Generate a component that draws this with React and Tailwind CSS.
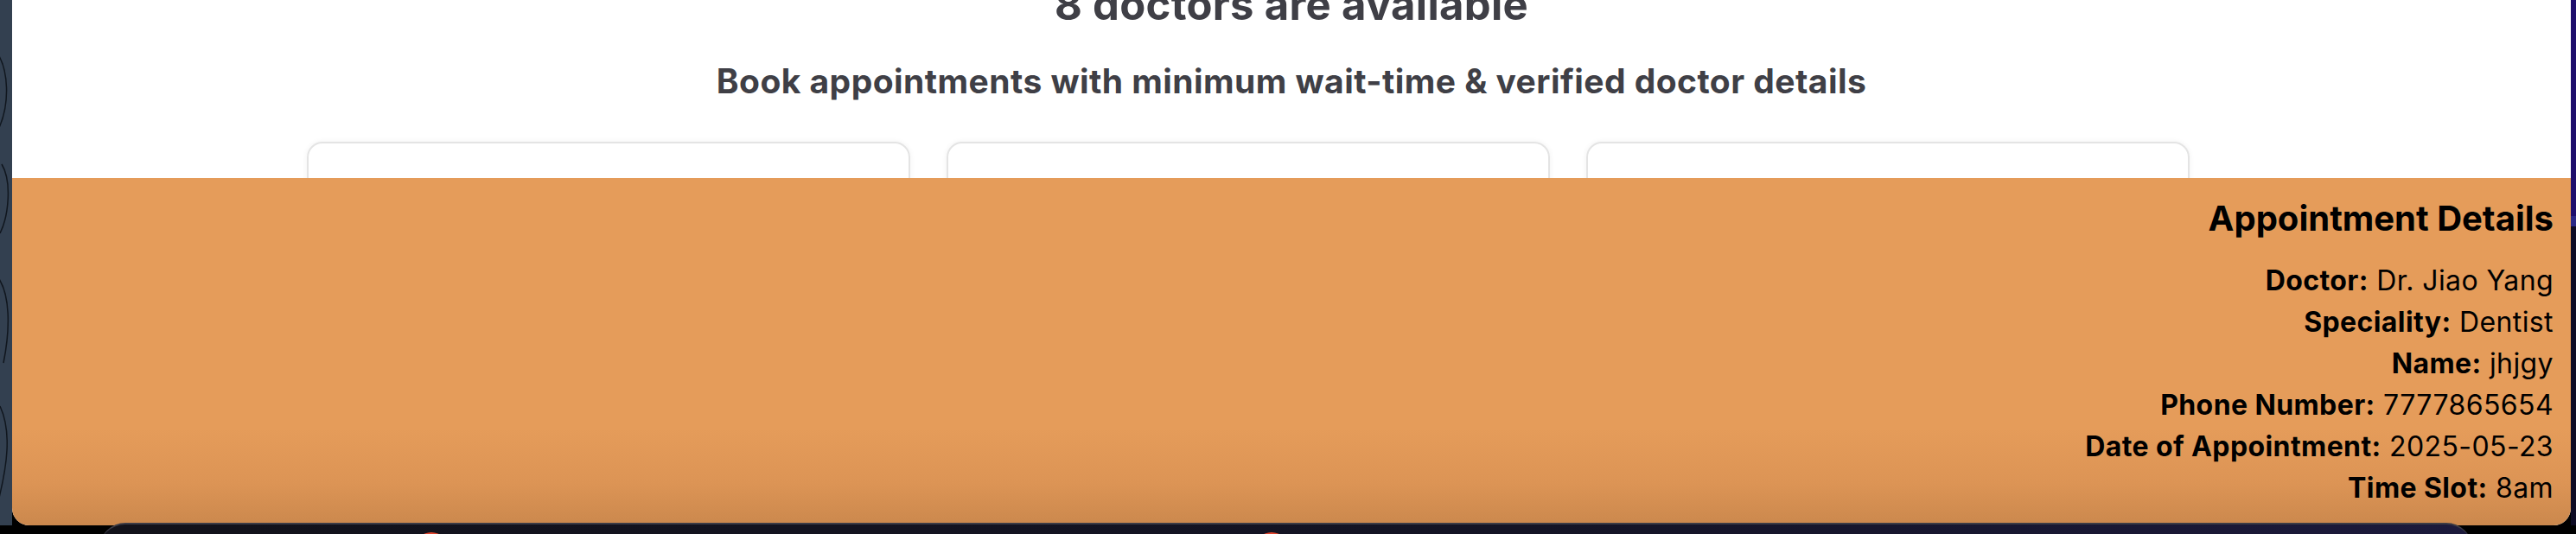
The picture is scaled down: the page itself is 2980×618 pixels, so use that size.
import React from 'react'

const details = [
  { label: "Doctor:", value: "Dr. Jiao Yang" },
  { label: "Speciality:", value: "Dentist" },
  { label: "Name:", value: "jhjgy" },
  { label: "Phone Number:", value: "7777865654" },
  { label: "Date of Appointment:", value: "2025-05-23" },
  { label: "Time Slot:", value: "8am" },
]

const font = { fontFamily: "Inter, 'Noto Sans', sans-serif" }

const App = () => {
  return (
    <div className="relative w-[2980px] h-[618px] overflow-hidden bg-black" style={font}>
      <div className="flex h-[608px]">
        {/* wallpaper strip on the left */}
        <div className="w-[14px] h-full bg-[#334050] overflow-hidden">
          <svg width="14" height="608" viewBox="0 0 14 608" fill="none" stroke="#10161e" strokeWidth="1.5">
            <path d="M-4 60 C 10 80, 12 120, -2 150" />
            <path d="M2 190 C 14 210, 10 250, 0 270" />
            <path d="M-3 320 C 12 340, 12 380, 4 420" />
            <path d="M0 470 C 14 500, 8 540, -2 580" />
          </svg>
        </div>

        {/* browser window */}
        <div className="flex-1 flex flex-col bg-white rounded-b-[20px] overflow-hidden">
          <div className="h-[206px] overflow-hidden flex flex-col items-center">
            <h1 className="mt-[-19px] text-[49px] leading-none font-bold text-[#3f3f46] tracking-[0.3px]">
              8 doctors are available
            </h1>
            <p className="mt-[44px] text-[39px] leading-none font-bold text-[#3f3f46] tracking-[0.45px]">
              Book appointments with minimum wait-time &amp; verified doctor details
            </p>
            <div className="self-start ml-[341px] mt-[51px] grid grid-cols-3 gap-[42px] w-[2178px]">
              <div className="h-[400px] rounded-[18px] border-2 border-[#e4e4e4] shadow-[0_0_6px_rgba(0,0,0,0.06)]" />
              <div className="h-[400px] rounded-[18px] border-2 border-[#e4e4e4] shadow-[0_0_6px_rgba(0,0,0,0.06)]" />
              <div className="h-[400px] rounded-[18px] border-2 border-[#e4e4e4] shadow-[0_0_6px_rgba(0,0,0,0.06)]" />
            </div>
          </div>

          {/* appointment details panel */}
          <div className="flex-1 flex flex-col items-end pr-[20px] pt-[19px] text-black bg-[linear-gradient(to_bottom,#e59c5a_0%,#e59c5a_72%,#dc9455_88%,#cb884d_100%)]">
            <h2 className="text-[40px] leading-[56px] font-bold">Appointment Details</h2>
            <div className="mt-[20px] flex flex-col items-end">
              {details.map((d) => (
                <p key={d.label} className="text-[32px] leading-[48px] tracking-[0.4px]">
                  <span className="font-bold">{d.label}</span> {d.value}
                </p>
              ))}
            </div>
          </div>
        </div>

        {/* wallpaper strip on the right */}
        <div className="w-[6px] h-full flex flex-col">
          <div className="h-[250px] bg-[#1e0e6c]" />
          <div className="h-[12px] bg-[#2b2886]" />
          <div className="flex-1 bg-[#0e0b24]" />
        </div>
      </div>

      {/* dock peeking over the bottom edge */}
      <div className="absolute left-[115px] right-[120px] top-[605px] h-[40px] rounded-t-[30px] border-t-2 border-[#3c3c46] bg-[linear-gradient(to_right,#12121a,#141425_60%,#1c1a3c)]">
        <div className="absolute left-[364px] top-[9px] w-[40px] h-[40px] rounded-full bg-[#e0442c]" />
        <div className="absolute left-[1336px] top-[9px] w-[40px] h-[40px] rounded-full bg-[#e0442c]" />
      </div>
    </div>
  )
}

export default App
